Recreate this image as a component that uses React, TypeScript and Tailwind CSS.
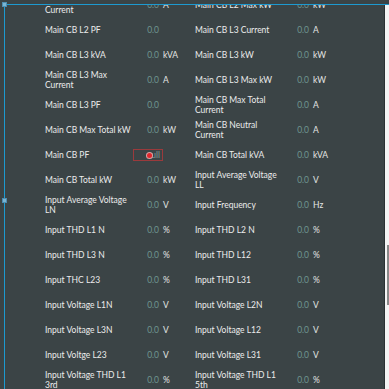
import React from "react";

interface Reading {
  label: string;
  value: string;
  unit: string;
  error?: boolean;
}

const readings: Reading[] = [
  { label: "Main CB L2 Max Current", value: "0.0", unit: "A" },
  { label: "Main CB L2 Max kW", value: "0.0", unit: "kW" },
  { label: "Main CB L2 PF", value: "0.0", unit: "" },
  { label: "Main CB L3 Current", value: "0.0", unit: "A" },
  { label: "Main CB L3 kVA", value: "0.0", unit: "kVA" },
  { label: "Main CB L3 kW", value: "0.0", unit: "kW" },
  { label: "Main CB L3 Max Current", value: "0.0", unit: "A" },
  { label: "Main CB L3 Max kW", value: "0.0", unit: "kW" },
  { label: "Main CB L3 PF", value: "0.0", unit: "" },
  { label: "Main CB Max Total Current", value: "0.0", unit: "A" },
  { label: "Main CB Max Total kW", value: "0.0", unit: "kW" },
  { label: "Main CB Neutral Current", value: "0.0", unit: "A" },
  { label: "Main CB PF", value: "null", unit: "", error: true },
  { label: "Main CB Total kVA", value: "0.0", unit: "kVA" },
  { label: "Main CB Total kW", value: "0.0", unit: "kW" },
  { label: "Input Average Voltage LL", value: "0.0", unit: "V" },
  { label: "Input Average Voltage LN", value: "0.0", unit: "V" },
  { label: "Input Frequency", value: "0.0", unit: "Hz" },
  { label: "Input THD L1 N", value: "0.0", unit: "%" },
  { label: "Input THD L2 N", value: "0.0", unit: "%" },
  { label: "Input THD L3 N", value: "0.0", unit: "%" },
  { label: "Input THD L12", value: "0.0", unit: "%" },
  { label: "Input THC L23", value: "0.0", unit: "%" },
  { label: "Input THD L31", value: "0.0", unit: "%" },
  { label: "Input Voltage L1N", value: "0.0", unit: "V" },
  { label: "Input Voltage L2N", value: "0.0", unit: "V" },
  { label: "Input Voltage L3N", value: "0.0", unit: "V" },
  { label: "Input Voltage L12", value: "0.0", unit: "V" },
  { label: "Input Voltge L23", value: "0.0", unit: "V" },
  { label: "Input Voltage L31", value: "0.0", unit: "V" },
  { label: "Input Voltage THD L1 3rd", value: "0.0", unit: "%" },
  { label: "Input Voltage THD L1 5th", value: "0.0", unit: "%" },
];

function ReadingCell({ item }: { item: Reading }) {
  return (
    <div className="flex items-center h-[25px]">
      <div className="w-[88px] pr-[2px] text-[#ececec] leading-[10.5px]">{item.label}</div>
      {item.error ? (
        <div className="relative w-[30px] h-[12px] border border-[#9a3a3c] flex items-center justify-end pr-[2px] text-[#7f9c98]">
          null
          <span className="absolute left-[13px] top-[3px] w-[5px] h-[5px] rounded-full bg-[#e0262c] ring-1 ring-[#d9a0a0]" />
        </div>
      ) : (
        <div className="w-[30px] text-right pr-[4px] text-[#6f9690]">{item.value}</div>
      )}
      <div className="text-[#e4e4e4]">{item.unit}</div>
    </div>
  );
}

export default function App() {
  return (
    <div className="relative w-[389px] h-[389px] overflow-hidden bg-[#3b4446] pt-[4px] pl-[4px] font-['Lato',sans-serif] text-[8.5px]">
      <div className="flex h-[385px] border-t border-l border-[#1d9ad0]">
        <div className="flex-1 overflow-hidden">
          <div className="-mt-[12.5px] pl-[40px] grid grid-cols-[150px_150px]">
            {readings.map((r) => (
              <ReadingCell key={r.label} item={r} />
            ))}
          </div>
        </div>
        <div className="w-[5px] border-l border-[#2a3133] bg-[#f4f4f4] flex flex-col items-end pt-[240px]">
          <div className="w-[2px] h-[60px] bg-[#8a8a8a]" />
        </div>
      </div>

      {/* selection handles */}
      <div className="absolute left-[2px] top-[2px] w-[5px] h-[5px] bg-[#7ab4d2] border border-[#4d8fb3]" />
      <div className="absolute left-[2px] top-[198px] w-[5px] h-[5px] bg-[#7ab4d2] border border-[#4d8fb3]" />
    </div>
  );
}
